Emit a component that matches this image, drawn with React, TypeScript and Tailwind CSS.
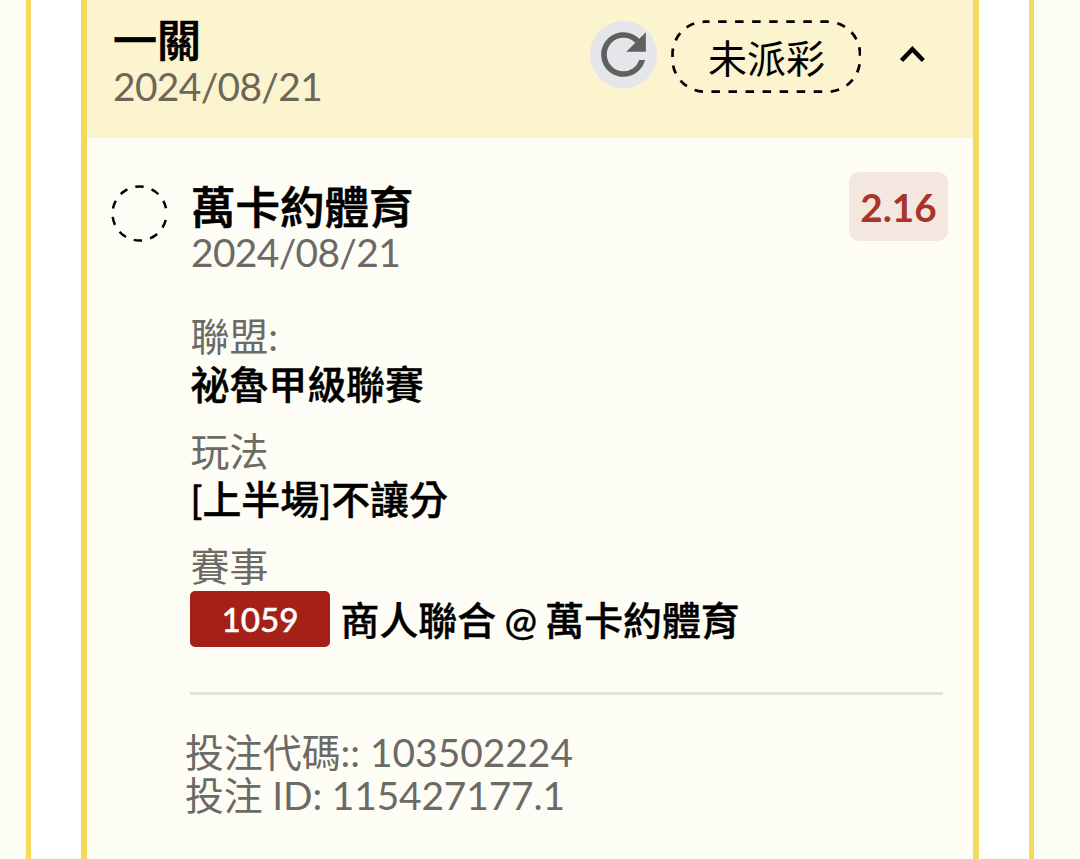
import React from 'react';
import { MdRefresh } from 'react-icons/md';

const BET = {
    title: '一關',
    date: '2024/08/21',
    status: '未派彩',
    team: '萬卡約體育',
    odds: '2.16',
    matchNo: '1059',
    match: '商人聯合 @ 萬卡約體育',
};

const DETAILS = [
    { label: '聯盟:', value: '祕魯甲級聯賽' },
    { label: '玩法', value: '[上半場]不讓分' },
];

const StatusPill: React.FC<{ children: React.ReactNode }> = ({ children }) => (
    <div className="relative flex h-[73px] w-[190px] items-center justify-center">
        <svg className="absolute inset-0" width="190" height="73" viewBox="0 0 190 73" fill="none">
            <rect
                x="1.5" y="1.7" width="187.5" height="70" rx="32.5"
                stroke="#000" strokeWidth="2.7" strokeDasharray="8.5 8.55" strokeDashoffset="4"
            />
        </svg>
        <span className="pl-[1px] pt-[3px] text-[39px] leading-[56px] text-black">{children}</span>
    </div>
);

const PendingCircle: React.FC = () => (
    <svg className="mt-[14px] shrink-0" width="57" height="57" viewBox="-28.5 -28.5 57 57" fill="none">
        {/* open arc, the dashes leave a wider gap at three o'clock */}
        <path
            d="M26.2 6.53A27 27 0 1 1 26.48 -5.25"
            stroke="#000" strokeWidth="2.5" strokeDasharray="8.3 8.3"
        />
    </svg>
);

export default function App() {
    return (
        <div className="flex h-[859px] w-[1080px] overflow-hidden bg-white font-[Lato,'Noto_Sans_CJK_TC',sans-serif] text-[38.9px] text-[#6b6a65]">
            <div className="w-[31px] shrink-0 border-r-[5.5px] border-[#f3d95c] bg-[#fefdf5]" />

            <main className="mx-[50px] flex w-[898px] shrink-0 flex-col border-x-[6px] border-[#f3d95c] bg-[#fefdf5]">
                <header className="flex h-[138px] shrink-0 items-start bg-[#fcf3cf] pl-[26px]">
                    <div className="w-[477px] pt-[17px]">
                        <h1 className="text-[44px] font-medium leading-[47px] text-black [-webkit-text-stroke:0.7px]">{BET.title}</h1>
                        <p className="leading-[45px] tracking-[-0.65px] text-[#6b6856]">{BET.date}</p>
                    </div>
                    <button className="mt-[20.5px] flex size-[67px] items-center justify-center rounded-full bg-[#e4e6e9]">
                        <MdRefresh className="size-[67px] text-[#606060]" />
                    </button>
                    <div className="ml-[14px] mt-[20px]">
                        <StatusPill>{BET.status}</StatusPill>
                    </div>
                    <button className="ml-[38px] mt-[44px]">
                        <svg width="27" height="20" viewBox="0 0 27 20" fill="none">
                            <path d="M2.5 16.5L13.4 5.2L24.3 16.5" stroke="#000" strokeWidth="4.4" />
                        </svg>
                    </button>
                </header>

                <section className="flex items-start pl-[24px] pr-[25px] pt-[33px]">
                    <PendingCircle />
                    <div className="ml-[23px] flex-1 pt-[12px]">
                        <h2 className="text-[44.5px] font-medium leading-[47px] text-black [-webkit-text-stroke:0.7px]">{BET.team}</h2>
                        <p className="leading-[44px] tracking-[-0.65px]">{BET.date}</p>
                    </div>
                    <div className="mt-[1px] flex h-[69px] w-[99px] items-center justify-center rounded-[10px] bg-[#f4e7e0] pt-[1px] text-[38.7px] font-bold text-[#a93429]">
                        {BET.odds}
                    </div>
                </section>

                <section className="ml-[103px] mr-[30px] mt-[39px] border-b-[3px] border-[#e3e2da] pb-[45px]">
                    {DETAILS.map((d) => (
                        <div key={d.label} className="mb-[20px] pl-[0.5px]">
                            <p className="leading-[47px]">{d.label}</p>
                            <p className="font-medium leading-[48px] text-black [-webkit-text-stroke:0.4px]">{d.value}</p>
                        </div>
                    ))}
                    <p className="pl-[0.5px] leading-[47px]">賽事</p>
                    <div className="mt-[1px] flex items-center gap-[10.5px]">
                        <span className="flex h-[56px] w-[140px] items-center justify-center rounded-[5px] bg-[#a52017] pt-[2px] text-[33.3px] font-medium text-white [-webkit-text-stroke:0.4px]">
                            {BET.matchNo}
                        </span>
                        <span className="pt-[3px] font-medium leading-[53px] text-black [word-spacing:-1.5px] [-webkit-text-stroke:0.4px]">
                            {BET.match}
                        </span>
                    </div>
                </section>

                <footer className="ml-[98px] mt-[36px]">
                    <p className="leading-[43px]">投注代碼:: 103502224</p>
                    <p className="leading-[42px] tracking-[-0.15px]">投注 ID: 115427177.1</p>
                </footer>
            </main>

            <div className="w-[51px] shrink-0 border-l-[5.5px] border-[#f3d95c] bg-[#fefdf5]" />
        </div>
    );
}
